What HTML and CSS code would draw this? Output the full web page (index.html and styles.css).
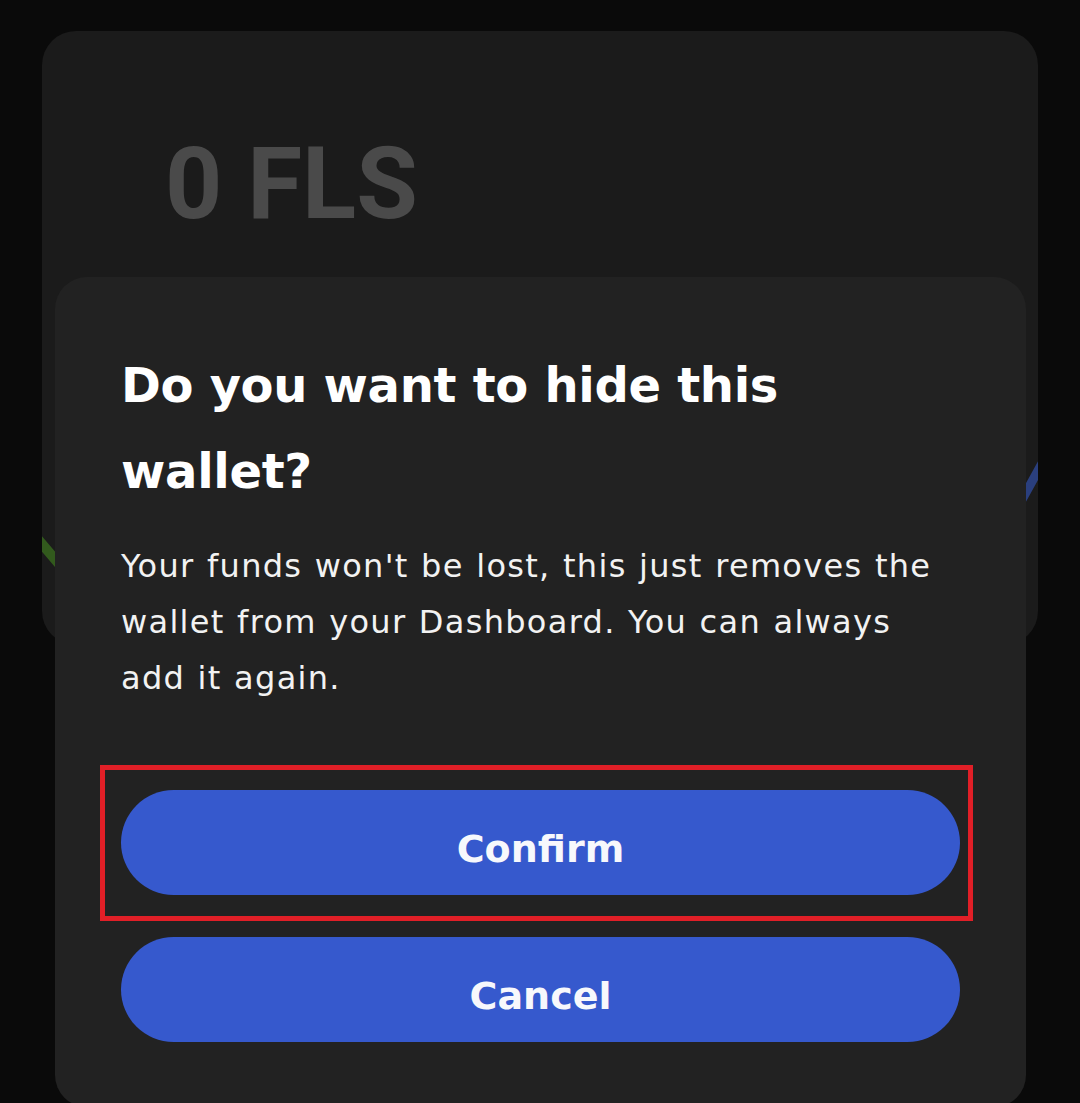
FILE: index.html
```html
<!DOCTYPE html>
<html lang="en">
<head>
<meta charset="utf-8">
<title>Hide wallet</title>
<link rel="stylesheet" href="styles.css">
</head>
<body>
<main class="screen">
  <section class="wallet-card">
    <div class="balance">0 FLS</div>
    <svg class="chart" width="996" height="614" viewBox="0 0 996 614" aria-hidden="true">
      <path class="line-green" d="M -6 506 L 40 560 L 300 600"/>
      <path class="line-blue" d="M 700 600 L 960 505 L 1004 425"/>
    </svg>
  </section>

  <div class="modal" role="dialog" aria-labelledby="modal-title">
    <h1 id="modal-title" class="modal-title">Do you want to hide this wallet?</h1>
    <p class="modal-text">Your funds won't be lost, this just removes the wallet from your Dashboard. You can always add it again.</p>
    <div class="actions">
      <div class="highlight-wrap">
        <button class="btn">Confirm</button>
        <span class="highlight"></span>
      </div>
      <button class="btn">Cancel</button>
    </div>
  </div>
</main>
</body>
</html>
```

FILE: styles.css
```css
html, body {
  margin: 0;
  padding: 0;
  height: 100%;
  overflow: hidden;
  background: #0a0a0a;
}

.screen {
  position: relative;
  width: 1080px;
  height: 1103px;
  padding-top: 31px;
  box-sizing: border-box;
}

.wallet-card {
  position: relative;
  margin: 0 42px;
  height: 614px;
  background: #1b1b1b;
  border-radius: 34px;
  padding: 103px 0 0 123px;
  box-sizing: border-box;
  overflow: hidden;
}

.balance {
  font-family: Roboto, "Liberation Sans", sans-serif;
  font-weight: 700;
  font-size: 100px;
  line-height: 100px;
  color: #4a4a4a;
  letter-spacing: 0px;
}

.chart {
  position: absolute;
  left: 0;
  top: 0;
}

.line-green {
  fill: none;
  stroke: #325a1d;
  stroke-width: 10;
  stroke-linecap: round;
}

.line-blue {
  fill: none;
  stroke: #2a3f7e;
  stroke-width: 9;
  stroke-linecap: round;
}

.modal {
  position: absolute;
  left: 55px;
  top: 277px;
  width: 971px;
  height: 830px;
  box-sizing: border-box;
  background: #222222;
  border-radius: 32px;
  padding: 65px 66px 0 66px;
  font-family: "DejaVu Sans", "Noto Sans", sans-serif;
  color: #ffffff;
}

.modal-title {
  margin: 0;
  font-size: 48px;
  line-height: 86px;
  font-weight: 700;
  letter-spacing: -0.3px;
}

.modal-text {
  margin: 24px 0 0 0;
  font-size: 32px;
  line-height: 56px;
  font-weight: 400;
  letter-spacing: 1.3px;
  word-spacing: 1px;
  color: #f2f2f2;
}

.actions {
  margin-top: 84px;
  display: flex;
  flex-direction: column;
  gap: 42px;
}

.highlight-wrap {
  position: relative;
}

.btn {
  display: block;
  width: 100%;
  height: 105px;
  border: none;
  border-radius: 53px;
  background: #3659cd;
  color: #f7f8fc;
  font-family: "DejaVu Sans", "Noto Sans", sans-serif;
  font-weight: 700;
  font-size: 38px;
  padding: 12px 0 0 0;
  margin: 0;
}

.highlight {
  position: absolute;
  left: -21px;
  right: -13px;
  top: -25px;
  bottom: -26px;
  border: 5px solid #e11f27;
  pointer-events: none;
}
```
